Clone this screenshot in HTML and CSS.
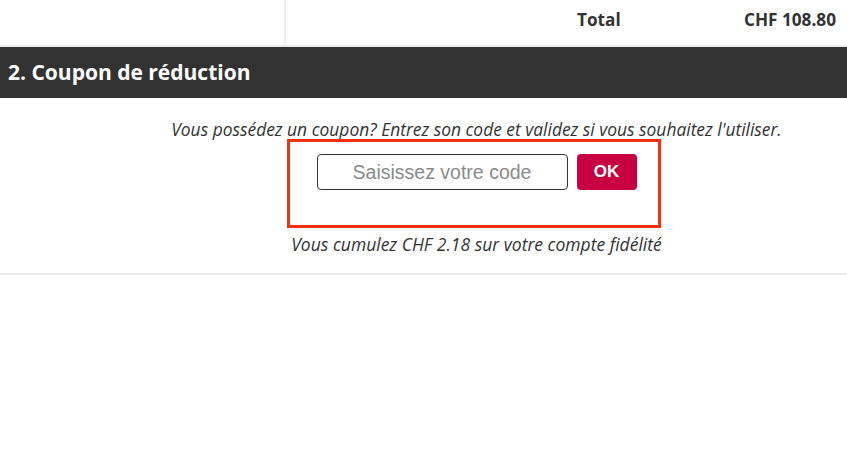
FILE: index.html
```html
<!DOCTYPE html>
<html lang="fr">
<head>
<meta charset="utf-8">
<link rel="stylesheet" href="styles.css">
</head>
<body>
<div class="summary">
  <div class="summary-spacer"></div>
  <div class="summary-cell">
    <span class="total-label">Total</span>
    <span class="total-value">CHF 108.80</span>
  </div>
</div>
<h2 class="section-title">2. Coupon de réduction</h2>
<div class="coupon">
  <p class="coupon-intro">Vous possédez un coupon? Entrez son code et validez si vous souhaitez l'utiliser.</p>
  <div class="highlight">
    <form class="coupon-form">
      <input class="coupon-input" type="text" placeholder="Saisissez votre code">
      <button class="coupon-btn" type="button">OK</button>
    </form>
  </div>
  <p class="loyalty">Vous cumulez CHF 2.18 sur votre compte fidélité</p>
</div>
<div class="divider"></div>
</body>
</html>
```
FILE: styles.css
```css
* { box-sizing: border-box; }
body {
  margin: 0;
  background: #fff;
  font-family: "Open Sans", "Liberation Sans", sans-serif;
  color: #333;
}
.summary {
  display: flex;
  height: 47px;
  border-bottom: 2px solid #ececec;
}
.summary-spacer { width: 284px; }
.summary-cell {
  flex: 1;
  border-left: 2px solid #eeeeee;
  display: flex;
  align-items: center;
  padding-bottom: 6px;
  font-weight: 700;
  font-size: 17.2px;
  color: #333;
}
.total-label { margin-left: 291px; }
.total-value { margin-left: auto; margin-right: 11px; }
.section-title {
  margin: 0;
  height: 51px;
  background: #323232;
  color: #fff;
  font-size: 21px;
  font-weight: 700;
  padding-left: 8px;
  display: flex;
  align-items: center;
  padding-bottom: 2px;
}
.coupon {
  padding-left: 106px;
  display: flex;
  flex-direction: column;
  align-items: center;
}
.coupon-intro {
  margin: 21px 0 0;
  font-style: italic;
  font-size: 17.4px;
  line-height: 20px;
  color: #333;
}
.highlight {
  margin-top: 0;
  margin-right: 5px;
  width: 374px;
  height: 89px;
  border: 3px solid #f4300f;
  padding-top: 12px;
  display: flex;
  justify-content: center;
}
.coupon-form {
  display: flex;
  gap: 9px;
  height: 36px;
  margin-left: 5px;
}
.coupon-input {
  width: 251px;
  height: 36px;
  border: 1px solid #333;
  border-radius: 4px;
  font-family: "Liberation Sans", Arial, sans-serif;
  font-size: 19.5px;
  text-align: center;
  color: #333;
  padding: 0;
}
.coupon-input::placeholder { color: #8a8a8a; }
.coupon-btn {
  width: 60px;
  height: 36px;
  border: none;
  border-radius: 4px;
  background: #c70041;
  color: #fff;
  font-family: "Liberation Sans", Arial, sans-serif;
  font-weight: 700;
  font-size: 17px;
  padding: 0;
}
.loyalty {
  margin: 6px 0 0;
  font-style: italic;
  font-size: 17.5px;
  line-height: 20px;
  color: #333;
}
.divider {
  margin-top: 19px;
  height: 2px;
  background: #ececec;
}
```
